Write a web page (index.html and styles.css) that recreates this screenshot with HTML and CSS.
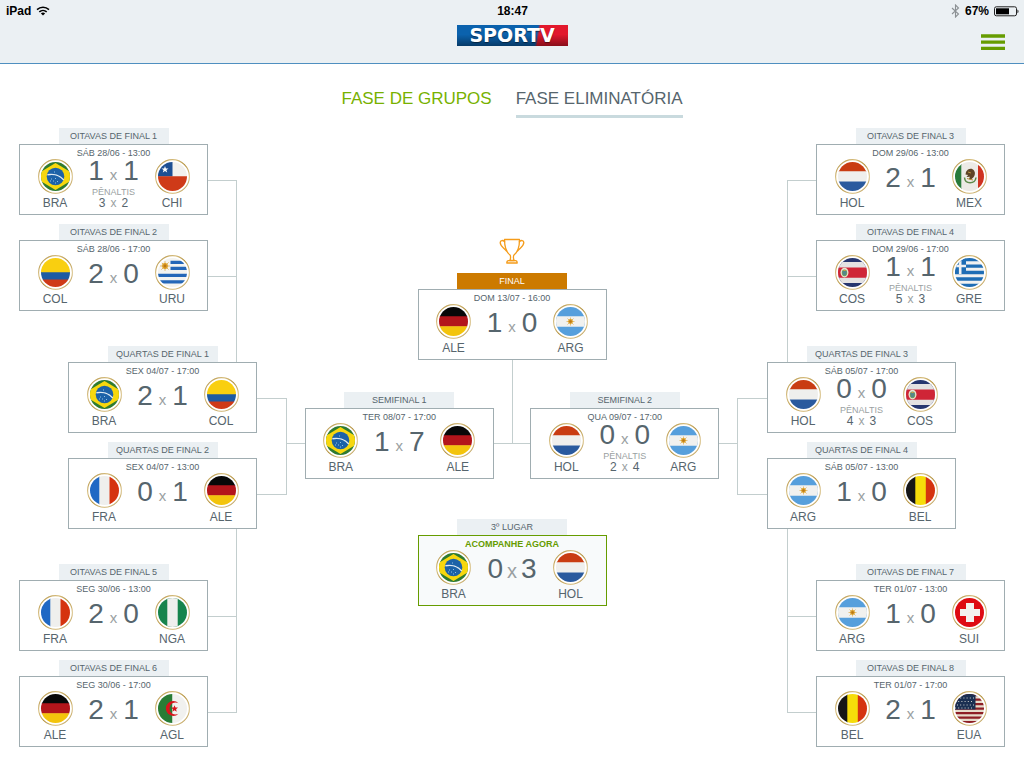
FILE: index.html
```html
<!DOCTYPE html>
<html lang="pt-BR">
<head>
<meta charset="utf-8">
<meta name="viewport" content="width=device-width, initial-scale=1">
<title>SporTV - Fase eliminatória</title>
<link rel="stylesheet" href="styles.css">
</head>
<body>
<svg class="sprite" aria-hidden="true">
  <defs>
    <clipPath id="disc"><circle cx="17.5" cy="17.5" r="14.5"/></clipPath>
    <linearGradient id="gold" x1="0" y1="0" x2="1" y2="1">
      <stop offset="0" stop-color="#a98634"/><stop offset=".3" stop-color="#d9c184"/><stop offset=".5" stop-color="#b28f3a"/><stop offset=".75" stop-color="#dcc690"/><stop offset="1" stop-color="#a98634"/>
    </linearGradient>
    <g id="ring"><circle cx="17.5" cy="17.5" r="16.9" fill="#fff" stroke="url(#gold)" stroke-width="1.1"/></g>
    <g id="sun">
      <circle r="2.4" fill="#e0a020"/><path d="M0-4V4M-4 0H4M-3-3 3 3M-3 3 3-3" stroke="#d9a02c" stroke-width=".6"/><circle r="1.2" fill="#b9761a"/>
    </g>
  </defs>
  <symbol id="bra" viewBox="0 0 35 35"><use href="#ring"/><g clip-path="url(#disc)">
    <path fill="#2f7a30" d="M0 0h35v35H0z"/><path fill="#f7d70e" d="M-5 17.5 17.5 4 40 17.5 17.5 31z"/>
    <circle cx="17.5" cy="17.5" r="8.8" fill="#1c62a8"/><path d="M9.4 15.8c6-1.4 12.500.8 16.400 5.200" fill="none" stroke="#dfeaf2" stroke-width="1.4"/>
    <path d="M13 20h1m1 2h1m1-2.500h1m1 3h1m-3 1.500h1m-6-2h1m3-9h1" stroke="#8fc0e6" stroke-width="1"/></g></symbol>
  <symbol id="chi" viewBox="0 0 35 35"><use href="#ring"/><g clip-path="url(#disc)">
    <path fill="#f2f1ee" d="M0 0h35v18H0z"/><path fill="#1d4f93" d="M0 0h17.500v17.500H0z"/><path fill="#cf3a18" d="M0 17.300h35V35H0z"/>
    <path fill="#fff" d="m10 7 .9 2.500h2.600l-2.100 1.600.8 2.500-2.200-1.500-2.200 1.500.8-2.500-2.100-1.600h2.600z"/></g></symbol>
  <symbol id="col" viewBox="0 0 35 35"><use href="#ring"/><g clip-path="url(#disc)">
    <path fill="#f9cf10" d="M0 0h35v18H0z"/><path fill="#1d5ba3" d="M0 17.300h35v8H0z"/><path fill="#cf3a18" d="M0 24.500h35V35H0z"/></g></symbol>
  <symbol id="uru" viewBox="0 0 35 35"><use href="#ring"/><g clip-path="url(#disc)">
    <path fill="#f3f3f0" d="M0 0h35v35H0z"/><path d="M15.500 7.300H35M15.500 13.300H35M0 20.300h35M0 26.800h35" stroke="#2467b8" stroke-width="3.300"/>
    <use href="#sun" transform="translate(10 11) scale(1.200)"/></g></symbol>
  <symbol id="ale" viewBox="0 0 35 35"><use href="#ring"/><g clip-path="url(#disc)">
    <path fill="#080808" d="M0 0h35v13H0z"/><path fill="#b3151b" d="M0 12.200h35v10.500H0z"/><path fill="#f3c40c" d="M0 22.300h35V35H0z"/></g></symbol>
  <symbol id="fra" viewBox="0 0 35 35"><use href="#ring"/><g clip-path="url(#disc)">
    <path fill="#1f68c4" d="M0 0h13v35H0z"/><path fill="#efefed" d="M12.300 0h10.400v35H12.300z"/><path fill="#d5330f" d="M22.500 0H35v35H22.500z"/></g></symbol>
  <symbol id="nga" viewBox="0 0 35 35"><use href="#ring"/><g clip-path="url(#disc)">
    <path fill="#17844d" d="M0 0h35v35H0z"/><path fill="#efefed" d="M12.300 0h10.400v35H12.300z"/></g></symbol>
  <symbol id="agl" viewBox="0 0 35 35"><use href="#ring"/><g clip-path="url(#disc)">
    <path fill="#287c35" d="M0 0h17.500v35H0z"/><path fill="#f1f1ef" d="M17.500 0H35v35H17.500z"/>
    <path fill="#d8141c" d="M23.500 12.300a7.400 7.400 0 1 0 0 10.400 6 6 0 1 1 0-10.400z"/>
    <path fill="#d8141c" d="m19.500 14.200 1 2.300 2.500.1-1.900 1.600.6 2.500-2.200-1.400-2.100 1.400.6-2.500-1.900-1.600 2.500-.1z"/></g></symbol>
  <symbol id="hol" viewBox="0 0 35 35"><use href="#ring"/><g clip-path="url(#disc)">
    <path fill="#c93c12" d="M0 0h35v13H0z"/><path fill="#efefed" d="M0 12.300h35v10.400H0z"/><path fill="#2a5a9e" d="M0 22.500h35V35H0z"/></g></symbol>
  <symbol id="mex" viewBox="0 0 35 35"><use href="#ring"/><g clip-path="url(#disc)">
    <path fill="#287a3a" d="M0 0h10v35H0z"/><path fill="#eceae6" d="M9.300 0h17v35h-17z"/><path fill="#cf3220" d="M26 0h9v35h-9z"/>
    <path d="M12.500 18.500c.5 7 10.500 7 11.500 0" fill="none" stroke="#5d8a4a" stroke-width="1.500"/>
    <path fill="#5e4427" d="M14 13c1.500-3.500 6-4.500 8-1.500 1.600 2.400 1 5-.5 6.700l-2.800 2.600-1.800-.8 1-2.200-3.400.2 1.600-2-2.600-.6z"/><path d="M15 19.500l6 1.500m-5-8 3 1" stroke="#b8913e" stroke-width="1"/></g></symbol>
  <symbol id="cos" viewBox="0 0 35 35"><use href="#ring"/><g clip-path="url(#disc)">
    <path fill="#26366f" d="M0 0h35v35H0z"/><path fill="#e4e2e2" d="M0 7h35v21H0z"/><path fill="#cf2536" d="M0 12.400h35v10.400H0z"/>
    <ellipse cx="9.500" cy="17.600" rx="4" ry="4.800" fill="#e9e4cf"/><ellipse cx="9.500" cy="17.800" rx="2.700" ry="3.400" fill="#6f9a62"/><path d="M7.500 17h4m-3.500 2h3" stroke="#3a77b0" stroke-width="1"/><path d="M8.500 15.500h2" stroke="#d0a040"/></g></symbol>
  <symbol id="gre" viewBox="0 0 35 35"><use href="#ring"/><g clip-path="url(#disc)">
    <path fill="#f0f1f1" d="M0 0h35v35H0z"/><path d="M0 4.600h35M0 11.100h35M0 17.500h35M0 24h35M0 30.400h35" stroke="#1e6db5" stroke-width="3.300"/>
    <path fill="#1e6db5" d="M0 0h14v19.100H0z"/><path d="M8.200 0v19.100M0 11h14" stroke="#f0f1f1" stroke-width="2.600"/></g></symbol>
  <symbol id="arg" viewBox="0 0 35 35"><use href="#ring"/><g clip-path="url(#disc)">
    <path fill="#569fdc" d="M0 0h35v35H0z"/><path fill="#f1f1ef" d="M0 12.300h35v10.400H0z"/><use href="#sun" x="17.500" y="17.500"/></g></symbol>
  <symbol id="bel" viewBox="0 0 35 35"><use href="#ring"/><g clip-path="url(#disc)">
    <path fill="#161616" d="M0 0h13v35H0z"/><path fill="#f6dc0a" d="M12.300 0h10.700v35H12.300z"/><path fill="#d5330f" d="M22.800 0H35v35H22.800z"/></g></symbol>
  <symbol id="sui" viewBox="0 0 35 35"><use href="#ring"/><g clip-path="url(#disc)">
    <path fill="#de0b12" d="M0 0h35v35H0z"/><path fill="#f3f1ee" d="M14 8h8v6h6v7h-6v6h-8v-6H8v-7h6z"/></g></symbol>
  <symbol id="eua" viewBox="0 0 35 35"><use href="#ring"/><g clip-path="url(#disc)">
    <path fill="#e6dccb" d="M0 0h35v35H0z"/><path d="M0 4.200h35M0 8.700h35M0 13.200h35M0 17.700h35M0 22.200h35M0 26.700h35M0 31.200h35" stroke="#8e1f26" stroke-width="2.300"/>
    <path fill="#1b2f52" d="M0 0h23.500v18.600H0z"/><path d="M5 7h19M3 10.500h19M5 14h19M3 17h19" stroke="#cfd2cf" stroke-width="1" stroke-dasharray="1 2.200"/></g></symbol>
</svg>

<header class="topbar">
  <div class="status">
    <span class="device">iPad
      <svg width="14" height="10" viewBox="0 0 14 10" aria-hidden="true"><g fill="none" stroke="#000" stroke-width="1.500"><path d="M1 3.600c3.400-3.300 8.600-3.300 12 0"/><path d="M3.300 5.900c2.100-2 5.300-2 7.400 0"/></g><path d="M7 9.500 4.900 7.400c1.200-1.100 3-1.100 4.200 0z"/></svg>
    </span>
    <time class="clock">18:47</time>
    <span class="power">
      <svg width="9" height="14" viewBox="0 0 9 14" aria-hidden="true"><path d="M1 4l6.500 6L4.500 13V1l3 3L1 10" fill="none" stroke="#8c9194" stroke-width="1.100"/></svg>
      <span>67%</span>
      <svg width="25" height="11" viewBox="0 0 25 11" aria-hidden="true"><rect x=".5" y=".8" width="22" height="9" rx="1.800" fill="none" stroke="#222"/><rect x="2" y="2.300" width="13" height="6"/><path d="M23.500 3.500c1.300.7 1.300 3 0 3.700z"/></svg>
    </span>
  </div>
  <div class="brandbar">
    <a class="logo" href="#" aria-label="SporTV"><span>SPORTV</span></a>
    <button class="menu" type="button" aria-label="Menu">
      <svg width="24" height="17" viewBox="0 0 24 17" aria-hidden="true"><path d="M0 2h24M0 8.200h24M0 14.400h24" stroke="#669c00" stroke-width="3.300"/></svg>
    </button>
  </div>
</header>

<nav class="phases">
  <a href="#grupos">FASE DE GRUPOS</a>
  <a href="#eliminatoria" aria-current="page">FASE ELIMINATÓRIA</a>
</nav>

<main class="bracket">
  <section class="side">
    <div class="pair">
      <div class="games">
        <article class="match"><h2>OITAVAS DE FINAL 1</h2><div class="card"><p class="date">SÁB 28/06 - 13:00</p><div class="duel">
          <div class="team"><svg><use href="#bra"/></svg>BRA</div>
          <div class="result"><p class="score pen"><b>1</b><i>x</i><b>1</b></p><p class="label">PÊNALTIS</p><p class="shootout"><b>3</b><i>x</i><b>2</b></p></div>
          <div class="team"><svg><use href="#chi"/></svg>CHI</div></div></div></article>
        <article class="match"><h2>OITAVAS DE FINAL 2</h2><div class="card"><p class="date">SÁB 28/06 - 17:00</p><div class="duel">
          <div class="team"><svg><use href="#col"/></svg>COL</div>
          <div class="result"><p class="score"><b>2</b><i>x</i><b>0</b></p></div>
          <div class="team"><svg><use href="#uru"/></svg>URU</div></div></div></article>
      </div>
      <div class="link down"><span class="fork"></span><span class="stem"></span></div>
    </div>
    <div class="pair quarter">
      <div class="games">
        <article class="match"><h2>QUARTAS DE FINAL 1</h2><div class="card"><p class="date">SEX 04/07 - 17:00</p><div class="duel">
          <div class="team"><svg><use href="#bra"/></svg>BRA</div>
          <div class="result"><p class="score"><b>2</b><i>x</i><b>1</b></p></div>
          <div class="team"><svg><use href="#col"/></svg>COL</div></div></div></article>
        <article class="match"><h2>QUARTAS DE FINAL 2</h2><div class="card"><p class="date">SEX 04/07 - 13:00</p><div class="duel">
          <div class="team"><svg><use href="#fra"/></svg>FRA</div>
          <div class="result"><p class="score"><b>0</b><i>x</i><b>1</b></p></div>
          <div class="team"><svg><use href="#ale"/></svg>ALE</div></div></div></article>
      </div>
      <div class="link"><span class="fork"></span></div>
    </div>
    <div class="pair">
      <div class="games">
        <article class="match"><h2>OITAVAS DE FINAL 5</h2><div class="card"><p class="date">SEG 30/06 - 13:00</p><div class="duel">
          <div class="team"><svg><use href="#fra"/></svg>FRA</div>
          <div class="result"><p class="score"><b>2</b><i>x</i><b>0</b></p></div>
          <div class="team"><svg><use href="#nga"/></svg>NGA</div></div></div></article>
        <article class="match"><h2>OITAVAS DE FINAL 6</h2><div class="card"><p class="date">SEG 30/06 - 17:00</p><div class="duel">
          <div class="team"><svg><use href="#ale"/></svg>ALE</div>
          <div class="result"><p class="score"><b>2</b><i>x</i><b>1</b></p></div>
          <div class="team"><svg><use href="#agl"/></svg>AGL</div></div></div></article>
      </div>
      <div class="link up"><span class="stem"></span><span class="fork"></span></div>
    </div>
  </section>

  <section class="center">
    <svg class="trophy" width="26" height="27" viewBox="0 0 26 27" aria-hidden="true"><g fill="none" stroke="#f59c1a" stroke-width="1.300" stroke-linecap="round" stroke-linejoin="round"><path d="M5.500 1.500h15c0 8-1.500 12.500-5.500 15.500-.8.700-.8 4.500.3 5.500h-4.600c1.100-1 1.100-4.800.3-5.500-4-3-5.500-7.500-5.500-15.500z"/><path d="M5.600 3.800C4 2 1.200 2 1.200 4.500c0 3.800 3.300 5 6.300 8.500M20.400 3.800c1.600-1.800 4.400-1.800 4.400.7 0 3.800-3.300 5-6.300 8.500"/><path d="M9.500 22.700h7c1.200 0 1.700.8 1.700 2.300H7.800c0-1.500.5-2.300 1.700-2.300z"/></g></svg>
    <article class="match final"><h2>FINAL</h2><div class="card"><p class="date">DOM 13/07 - 16:00</p><div class="duel">
      <div class="team"><svg><use href="#ale"/></svg>ALE</div>
      <div class="result"><p class="score"><b>1</b><i>x</i><b>0</b></p></div>
      <div class="team"><svg><use href="#arg"/></svg>ARG</div></div></div></article>
    <span class="drop"></span>
    <div class="semis">
      <span class="rail"></span>
      <article class="match"><h2>SEMIFINAL 1</h2><div class="card"><p class="date">TER 08/07 - 17:00</p><div class="duel">
        <div class="team"><svg><use href="#bra"/></svg>BRA</div>
        <div class="result"><p class="score"><b>1</b><i>x</i><b>7</b></p></div>
        <div class="team"><svg><use href="#ale"/></svg>ALE</div></div></div></article>
      <span class="rail"></span><span class="rail joint"></span>
      <article class="match"><h2>SEMIFINAL 2</h2><div class="card"><p class="date">QUA 09/07 - 17:00</p><div class="duel">
        <div class="team"><svg><use href="#hol"/></svg>HOL</div>
        <div class="result"><p class="score pen"><b>0</b><i>x</i><b>0</b></p><p class="label">PÊNALTIS</p><p class="shootout"><b>2</b><i>x</i><b>4</b></p></div>
        <div class="team"><svg><use href="#arg"/></svg>ARG</div></div></div></article>
      <span class="rail"></span>
    </div>
    <article class="match live"><h2>3º LUGAR</h2><div class="card"><p class="date">ACOMPANHE AGORA</p><div class="duel">
      <div class="team"><svg><use href="#bra"/></svg>BRA</div>
      <div class="result"><p class="score"><b>0</b><i>x</i><b>3</b></p></div>
      <div class="team"><svg><use href="#hol"/></svg>HOL</div></div></div></article>
  </section>

  <section class="side right">
    <div class="pair">
      <div class="games">
        <article class="match"><h2>OITAVAS DE FINAL 3</h2><div class="card"><p class="date">DOM 29/06 - 13:00</p><div class="duel">
          <div class="team"><svg><use href="#hol"/></svg>HOL</div>
          <div class="result"><p class="score"><b>2</b><i>x</i><b>1</b></p></div>
          <div class="team"><svg><use href="#mex"/></svg>MEX</div></div></div></article>
        <article class="match"><h2>OITAVAS DE FINAL 4</h2><div class="card"><p class="date">DOM 29/06 - 17:00</p><div class="duel">
          <div class="team"><svg><use href="#cos"/></svg>COS</div>
          <div class="result"><p class="score pen"><b>1</b><i>x</i><b>1</b></p><p class="label">PÊNALTIS</p><p class="shootout"><b>5</b><i>x</i><b>3</b></p></div>
          <div class="team"><svg><use href="#gre"/></svg>GRE</div></div></div></article>
      </div>
      <div class="link down"><span class="fork"></span><span class="stem"></span></div>
    </div>
    <div class="pair quarter">
      <div class="games">
        <article class="match"><h2>QUARTAS DE FINAL 3</h2><div class="card"><p class="date">SÁB 05/07 - 17:00</p><div class="duel">
          <div class="team"><svg><use href="#hol"/></svg>HOL</div>
          <div class="result"><p class="score pen"><b>0</b><i>x</i><b>0</b></p><p class="label">PÊNALTIS</p><p class="shootout"><b>4</b><i>x</i><b>3</b></p></div>
          <div class="team"><svg><use href="#cos"/></svg>COS</div></div></div></article>
        <article class="match"><h2>QUARTAS DE FINAL 4</h2><div class="card"><p class="date">SÁB 05/07 - 13:00</p><div class="duel">
          <div class="team"><svg><use href="#arg"/></svg>ARG</div>
          <div class="result"><p class="score"><b>1</b><i>x</i><b>0</b></p></div>
          <div class="team"><svg><use href="#bel"/></svg>BEL</div></div></div></article>
      </div>
      <div class="link"><span class="fork"></span></div>
    </div>
    <div class="pair">
      <div class="games">
        <article class="match"><h2>OITAVAS DE FINAL 7</h2><div class="card"><p class="date">TER 01/07 - 13:00</p><div class="duel">
          <div class="team"><svg><use href="#arg"/></svg>ARG</div>
          <div class="result"><p class="score"><b>1</b><i>x</i><b>0</b></p></div>
          <div class="team"><svg><use href="#sui"/></svg>SUI</div></div></div></article>
        <article class="match"><h2>OITAVAS DE FINAL 8</h2><div class="card"><p class="date">TER 01/07 - 17:00</p><div class="duel">
          <div class="team"><svg><use href="#bel"/></svg>BEL</div>
          <div class="result"><p class="score"><b>2</b><i>x</i><b>1</b></p></div>
          <div class="team"><svg><use href="#eua"/></svg>EUA</div></div></div></article>
      </div>
      <div class="link up"><span class="stem"></span><span class="fork"></span></div>
    </div>
  </section>
</main>
</body>
</html>
```

FILE: styles.css
```css
:root {
  --ink: #56656d;
  --muted: #9a9fa2;
  --line: #c3cece;
  --edge: #a0adb1;
  --panel: #ebf0f3;
  --green: #669c00;
}

* { box-sizing: border-box; }

body {
  margin: 0;
  background: #fff;
  color: var(--ink);
  font-family: "Liberation Sans", Arial, sans-serif;
}

h2, p { margin: 0; font-weight: normal; }
b, i { font-weight: normal; font-style: normal; }

.sprite { position: absolute; width: 0; height: 0; }

/* Header */
.topbar {
  min-height: 64px;
  background: var(--panel);
  border-bottom: 1px solid #4f8fc0;
}

.status {
  display: grid;
  grid-template-columns: 1fr auto 1fr;
  padding: 0 5px 0 6px;
  color: #000;
  font-size: 12px;
  font-weight: bold;
  line-height: 22px;
}

.device, .power { display: flex; align-items: center; gap: 5px; }
.power { justify-content: flex-end; }

.brandbar {
  display: grid;
  grid-template-columns: 1fr auto 1fr;
  align-items: start;
  padding: 3px 19px 0;
}

.logo {
  grid-column: 2;
  display: flex;
  align-items: center;
  justify-content: center;
  width: 111px;
  height: 21px;
  background:
    linear-gradient(rgba(0, 0, 0, 0) 45%, rgba(0, 0, 0, .4)),
    linear-gradient(100deg, #0b62ad 0 71%, #e2182c 73%);
  color: #fff;
  font: bold 19px/21px "DejaVu Sans", sans-serif;
  text-decoration: none;
  text-shadow: 0 1px 1px rgba(0, 0, 0, .5);
}

.menu {
  justify-self: end;
  display: flex;
  margin: 0;
  padding: 9px 0 0;
  border: 0;
  background: none;
  cursor: pointer;
}

/* Phase tabs */
.phases {
  display: flex;
  justify-content: center;
  gap: 24px;
  padding: 20px 0 10px;
}

.phases a {
  padding-bottom: 2px;
  border-bottom: 3px solid transparent;
  color: #78b100;
  font-size: 17px;
  line-height: 29px;
  text-decoration: none;
}

.phases a[aria-current] { color: var(--ink); border-color: #c9dade; }

/* Bracket */
.bracket {
  display: grid;
  grid-template-columns: auto 1fr auto;
  padding: 0 19px 20px;
}

.side { display: flex; flex-direction: column; gap: 35px; }
.pair { display: flex; }
.right .pair { flex-direction: row-reverse; }
.games { display: flex; flex-direction: column; gap: 9px; }
.quarter { margin-left: 49px; }
.right .quarter { margin: 0 49px 0 0; }

.link {
  display: flex;
  flex-direction: column;
  width: 29px;
  margin: 52px 0 34px;
}
.quarter .link { width: 30px; }
.down { margin-bottom: -51px; }
.up { margin-top: -35px; }
.link span { border-right: 1px solid var(--line); }
.right .link span { border-right: 0; border-left: 1px solid var(--line); }
.link .fork {
  height: 97px;
  border-top: 1px solid var(--line);
  border-bottom: 1px solid var(--line);
}
.link .stem { flex: 1; }

.center {
  display: flex;
  flex-direction: column;
  align-items: center;
  padding-top: 110px;
}
.trophy { margin-bottom: 8px; }
.drop { height: 32px; border-left: 1px solid var(--line); }
.semis { display: flex; align-self: stretch; margin-bottom: 40px; }
.rail { flex: 1; height: 52px; border-bottom: 1px solid var(--line); }
.joint { border-left: 1px solid var(--line); }

/* Match */
.match { width: 189px; }

.match h2 {
  width: 110px;
  margin: 0 auto;
  background: var(--panel);
  font-size: 9px;
  line-height: 16px;
  text-align: center;
}

.card {
  padding: 2px 0 4px;
  border: 1px solid var(--edge);
  background: #fff;
}

.date { font-size: 9px; line-height: 12px; text-align: center; }

.duel {
  display: grid;
  grid-template-columns: 50px 1fr 50px;
  padding: 0 10px;
}

.team {
  display: flex;
  flex-direction: column;
  align-items: center;
  gap: 2px;
  font-size: 12px;
  line-height: 14px;
}
.team svg { width: 35px; height: 35px; }

.score, .shootout {
  display: flex;
  align-items: baseline;
  justify-content: center;
}
.score { gap: 6px; font-size: 28px; line-height: 38px; }
.score i { color: var(--muted); font-size: 15px; line-height: 1; }
.pen { line-height: 24px; }
.label {
  margin-top: 3px;
  color: var(--muted);
  font-size: 9px;
  line-height: 12px;
  text-align: center;
}
.shootout { gap: 5px; font-size: 12px; line-height: 10px; }
.shootout i { color: var(--muted); }

.final h2 { background: #cc7a00; color: #fff; }
.live .card { border-color: var(--green); background: #f8fafb; }
.live .date { color: var(--green); font-weight: bold; }
.live .score { gap: 4px; }
.live .score i { font-size: 20px; }
```
